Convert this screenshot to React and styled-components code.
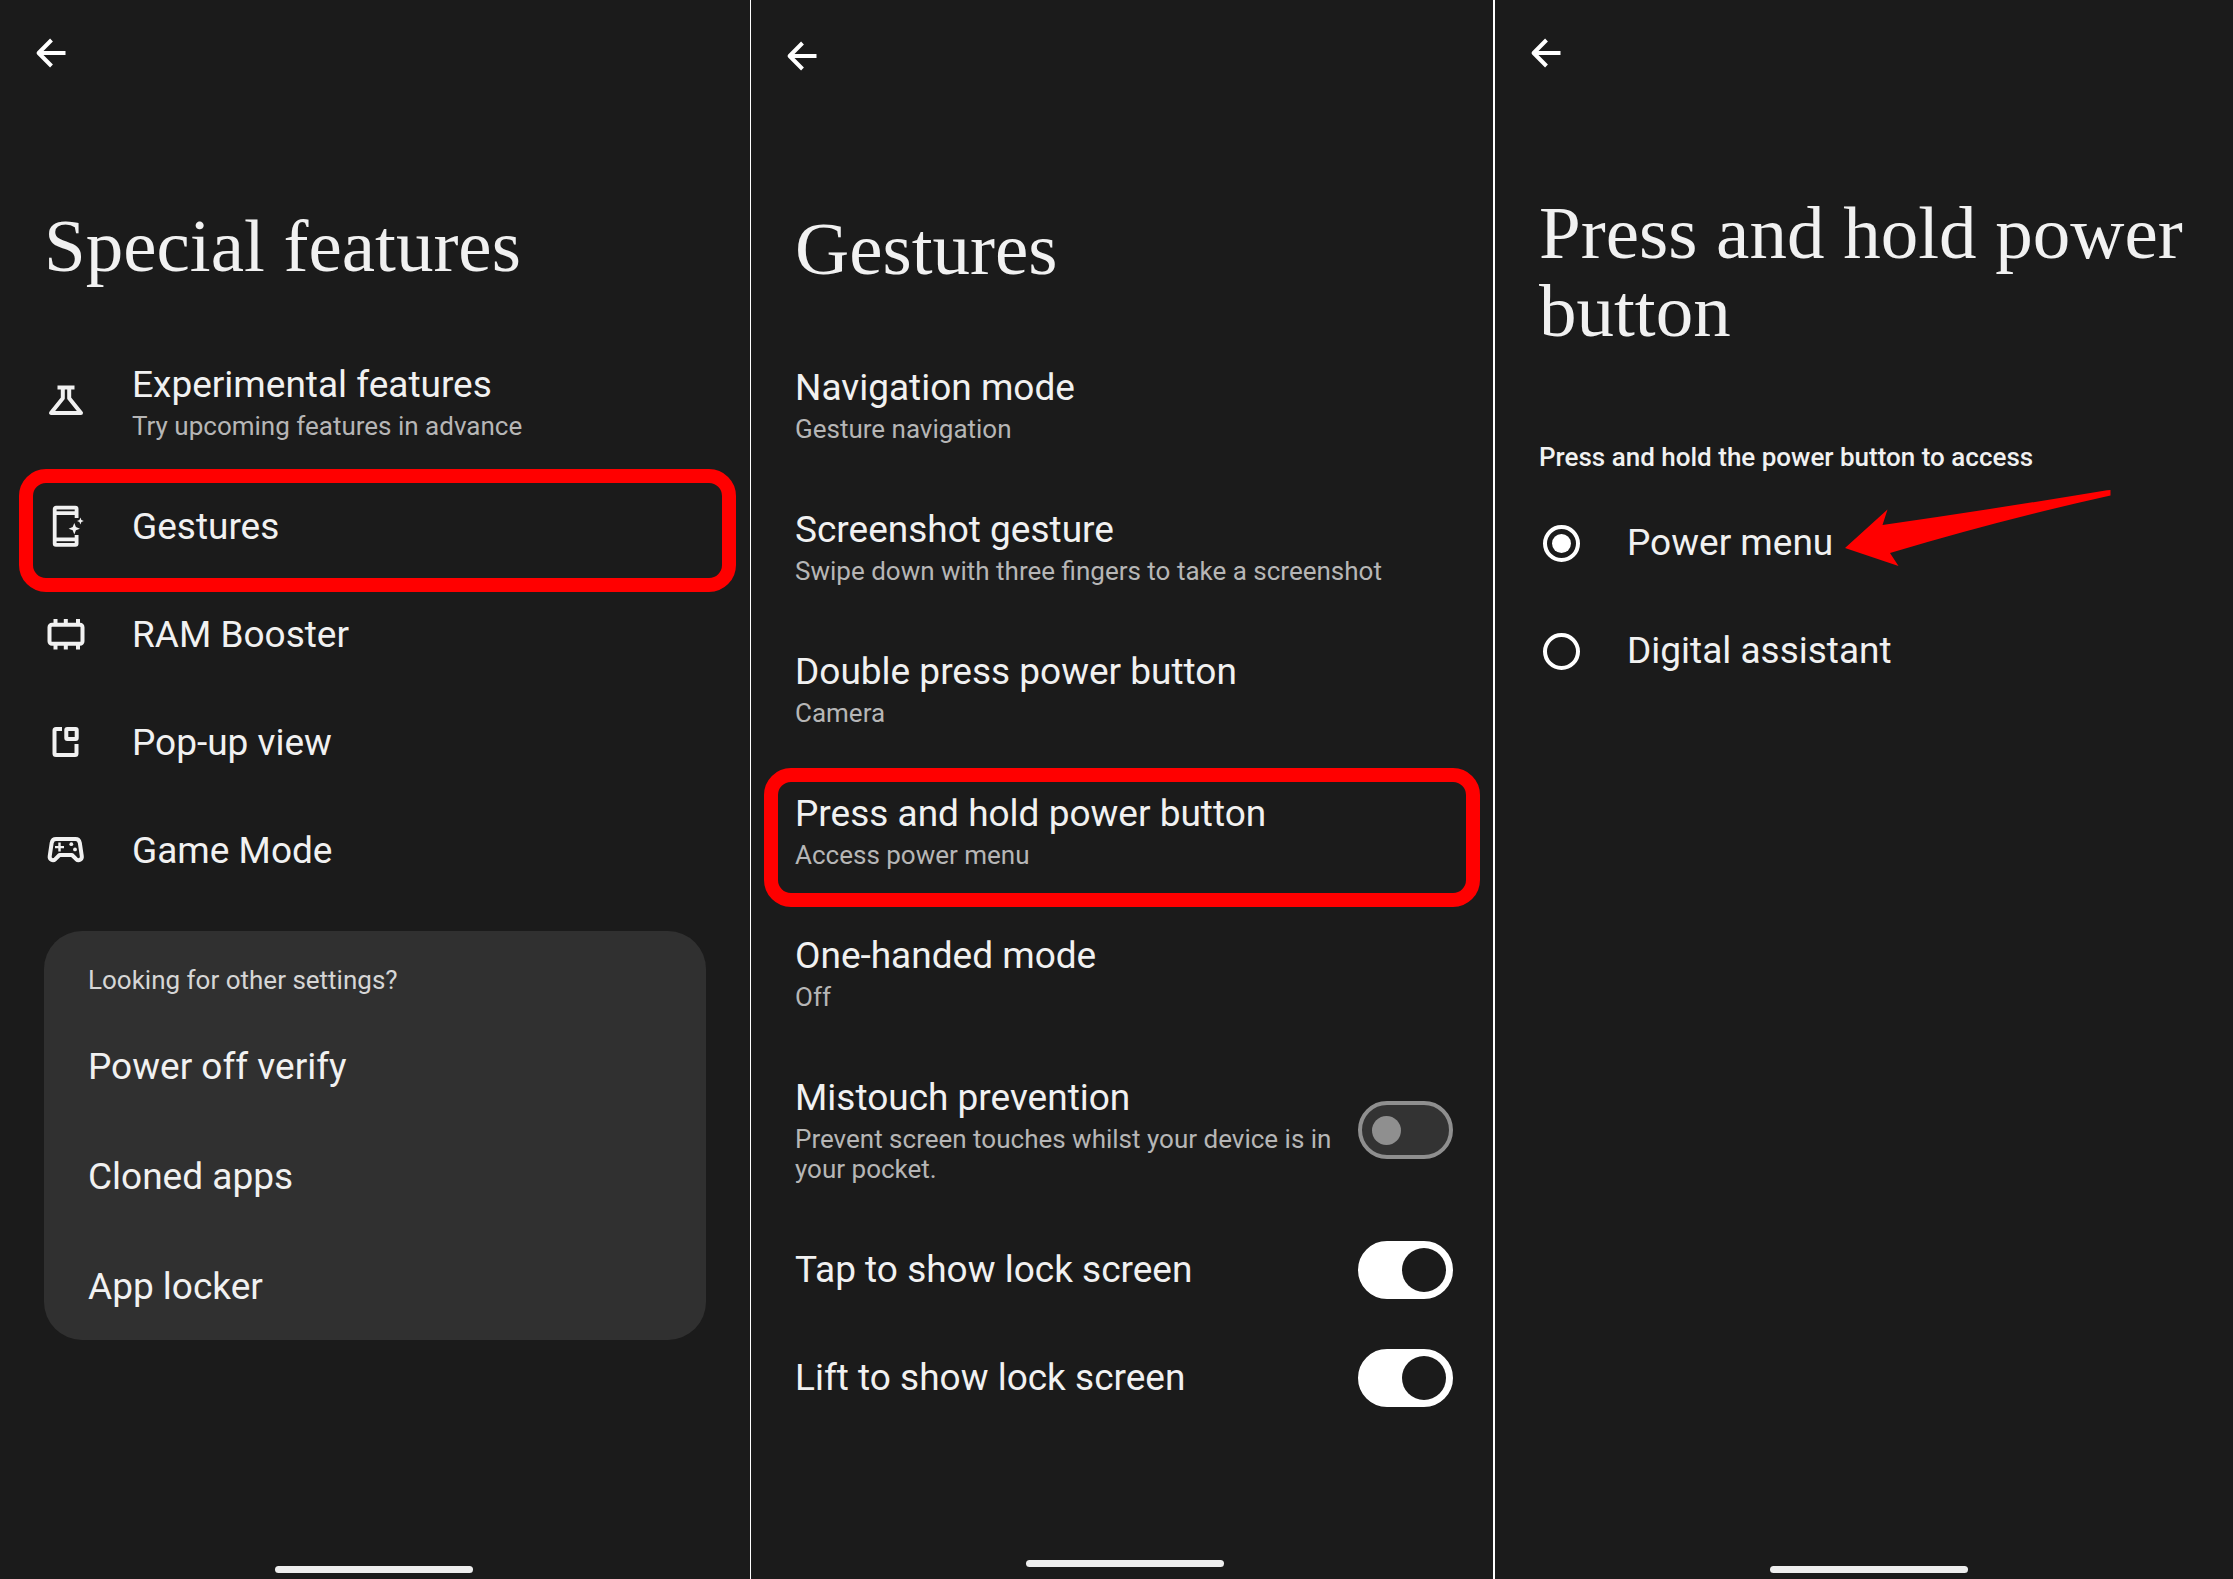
import React, { useState } from 'react'
import styled, { createGlobalStyle, ThemeProvider } from 'styled-components'

const theme = {
  bg: '#1b1b1b',
  card: '#303030',
  text: '#f1f1f1',
  sub: '#b6b6b6',
  mark: '#ff0000',
}

const MENU = [
  { title: 'Experimental features', sub: 'Try upcoming features in advance', icon: <FlaskIcon /> },
  { title: 'Gestures', icon: <GestureIcon />, mark: '-4px 14px -11px 19px' },
  { title: 'RAM Booster', icon: <RamIcon /> },
  { title: 'Pop-up view', icon: <PopupIcon /> },
  { title: 'Game Mode', icon: <GameIcon /> },
]

const OTHER = ['Power off verify', 'Cloned apps', 'App locker']

const GESTURES = [
  { title: 'Navigation mode', sub: 'Gesture navigation' },
  { title: 'Screenshot gesture', sub: 'Swipe down with three fingers to take a screenshot' },
  { title: 'Double press power button', sub: 'Camera' },
  { title: 'Press and hold power button', sub: 'Access power menu', mark: '8px 13px -5px 13px' },
  { title: 'One-handed mode', sub: 'Off' },
]

const TOGGLES = [
  {
    id: 'mistouch',
    title: 'Mistouch prevention',
    sub: 'Prevent screen touches whilst your device is in your pocket.',
  },
  { id: 'tap', title: 'Tap to show lock screen' },
  { id: 'lift', title: 'Lift to show lock screen' },
]

const ACCESS = [
  { id: 'menu', title: 'Power menu' },
  { id: 'assistant', title: 'Digital assistant' },
]

export default function App() {
  return (
    <ThemeProvider theme={theme}>
      <GlobalStyle />
      <Screens>
        <SpecialFeatures />
        <Gestures />
        <PowerButton />
      </Screens>
    </ThemeProvider>
  )
}

function SpecialFeatures() {
  return (
    <Screen $line={1}>
      <Header />
      <Title>Special features</Title>
      {MENU.map((item) => (
        <Item key={item.title} {...item} />
      ))}
      <Card>
        <CardLabel>Looking for other settings?</CardLabel>
        {OTHER.map((name) => (
          <CardLink key={name} href="#">
            {name}
          </CardLink>
        ))}
      </Card>
      <HomeBar />
    </Screen>
  )
}

function Gestures() {
  const [on, setOn] = useState({ mistouch: false, tap: true, lift: true })

  return (
    <Screen $line={2} $top={3} $bottom={12}>
      <Header />
      <Title>Gestures</Title>
      {GESTURES.map((item) => (
        <Item key={item.title} {...item} />
      ))}
      {TOGGLES.map(({ id, title, sub }) => (
        <ToggleRow key={id} htmlFor={id}>
          <Texts>
            <Name>{title}</Name>
            {sub && <Sub>{sub}</Sub>}
          </Texts>
          <Switch
            id={id}
            type="checkbox"
            role="switch"
            checked={on[id]}
            onChange={(e) => setOn({ ...on, [id]: e.target.checked })}
          />
        </ToggleRow>
      ))}
      <HomeBar />
    </Screen>
  )
}

function PowerButton() {
  const [access, setAccess] = useState('menu')

  return (
    <Screen>
      <Header />
      <Title $tall>Press and hold power button</Title>
      <Options>
        <Legend>Press and hold the power button to access</Legend>
        {ACCESS.map(({ id, title }) => (
          <OptionRow key={id} htmlFor={id}>
            <IconBox>
              <Radio
                id={id}
                type="radio"
                name="access"
                checked={access === id}
                onChange={() => setAccess(id)}
              />
            </IconBox>
            <Name>{title}</Name>
            {id === 'menu' && <Pointer />}
          </OptionRow>
        ))}
      </Options>
      <HomeBar />
    </Screen>
  )
}

function Header() {
  return (
    <TopBar>
      <BackButton type="button" aria-label="Back">
        <svg width="32" height="32" viewBox="0 0 32 32" fill="none" stroke="#fff" strokeWidth="4">
          <path d="M16.500 3 3.600 16l12.900 13M3.600 16H30.500" strokeLinejoin="round" />
        </svg>
      </BackButton>
    </TopBar>
  )
}

function Item({ title, sub, icon, mark }) {
  return (
    <ItemRow type="button">
      {icon && <IconBox>{icon}</IconBox>}
      <Texts>
        <Name>{title}</Name>
        {sub && <Sub>{sub}</Sub>}
      </Texts>
      {mark && <Mark $inset={mark} />}
    </ItemRow>
  )
}

function Icon({ children }) {
  return (
    <svg width="44" height="44" viewBox="0 0 44 44" fill="none" stroke="#f1f1f1" strokeWidth="4">
      {children}
    </svg>
  )
}

function FlaskIcon() {
  return (
    <Icon>
      <path d="M13.5 7.5h17M18.8 8v10.2L7 33h30L25.2 18.2V8" strokeLinejoin="round" />
    </Icon>
  )
}

function GestureIcon() {
  return (
    <Icon>
      <path
        d="M32.6 13V4a1.300 1.300 0 0 0-1.300-1.300H12A1.300 1.300 0 0 0 10.700 4v34.500A1.300 1.300 0 0 0 12 39.800h19.300a1.300 1.300 0 0 0 1.300-1.300V30"
        strokeWidth="3.800"
      />
      <path d="M11 8.200h21.500M11 34.300h21.500" strokeWidth="3.800" />
      <path
        d="M30.300 18l1.600 4.100 4.100 1.600-4.100 1.600-1.600 4.100-1.600-4.100-4.100-1.600 4.100-1.600zM36.400 12.600l1 2.400 2.400 1-2.400 1-1 2.400-1-2.400-2.400-1 2.400-1z"
        fill="#f1f1f1"
        stroke="none"
      />
    </Icon>
  )
}

function RamIcon() {
  return (
    <Icon>
      <rect x="5.500" y="11.800" width="33" height="19" rx="2.500" />
      <path d="M11.500 6v6M21.800 6v6M34 6v6M11.500 31v5.500M21.800 31v5.500M34 31v5.500" />
    </Icon>
  )
}

function PopupIcon() {
  return (
    <Icon>
      <path d="M18 8h-6a1.500 1.500 0 0 0-1.500 1.500v23A1.500 1.500 0 0 0 12 34h19a1.500 1.500 0 0 0 1.500-1.500V23" />
      <rect x="22.300" y="8" width="10.400" height="10" rx="1" />
    </Icon>
  )
}

function GameIcon() {
  return (
    <Icon>
      <path
        d="M12 10h19.500c2.500 0 3.800 1.400 4.300 3.800l2 13.400c.4 3.300-3.100 5.300-5.600 3L28 26H15.500l-4.200 4.200c-2.500 2.300-6 .3-5.600-3l2-13.400c.5-2.400 1.800-3.800 4.300-3.800z"
        strokeLinejoin="round"
      />
      <path d="M15.500 13.600v9M11 18.100h9" strokeWidth="2.400" />
      <circle cx="27.300" cy="15.200" r="1.900" fill="#f1f1f1" stroke="none" />
      <circle cx="31" cy="20.400" r="1.900" fill="#f1f1f1" stroke="none" />
    </Icon>
  )
}

function Pointer() {
  return (
    <PointerSvg width="268" height="82" viewBox="0 0 268 82" aria-hidden="true">
      <path d="M1 61 43.500 22.500 38.500 38Q150 22 263 3.200L266.500 3v5.500Q156 33 46 66L54.500 79z" fill="#ff0000" />
    </PointerSvg>
  )
}

const GlobalStyle = createGlobalStyle`
  * {
    box-sizing: border-box;
  }

  body {
    margin: 0;
    background: ${theme.bg};
    color: ${theme.text};
    font-family: Roboto, sans-serif;
  }

  button {
    border: 0;
    background: none;
    color: inherit;
    font: inherit;
    cursor: pointer;
  }
`

const Screens = styled.main`
  display: grid;
  grid-template-columns: 751fr 744fr 738fr;
  min-height: 100vh;
`

const Screen = styled.section`
  display: flex;
  flex-direction: column;
  min-width: 0;
  padding: ${({ $top = 0 }) => $top}px 0 ${({ $bottom = 6 }) => $bottom}px;
  border-right: ${({ $line = 0 }) => $line}px solid #fff;
`

const TopBar = styled.header`
  display: flex;
  align-items: center;
  height: 106px;
  padding: 0 29px;
`

const BackButton = styled.button`
  display: flex;
  align-items: center;
  justify-content: center;
  width: 44px;
  height: 44px;
  padding: 0;
`

const Title = styled.h1`
  margin: 0;
  padding: ${({ $tall }) => ($tall ? '88px 40px 92px 44px' : '101px 40px 46px 44px')};
  font-family: 'Liberation Serif', serif;
  font-size: 75px;
  font-weight: 400;
  line-height: 78px;
`

const ItemRow = styled.button`
  position: relative;
  display: flex;
  align-items: center;
  gap: 44px;
  padding: 32px 44px;
  text-align: left;
`

const IconBox = styled.span`
  display: flex;
  align-items: center;
  justify-content: center;
  flex-shrink: 0;
  width: 44px;
  height: 44px;
`

const Texts = styled.span`
  display: flex;
  flex-direction: column;
  flex: 1;
  gap: 4px;
`

const Name = styled.span`
  font-size: 37px;
  line-height: 44px;
`

const Sub = styled.span`
  color: ${({ theme }) => theme.sub};
  font-size: 26px;
  line-height: 30px;
`

const Mark = styled.span`
  position: absolute;
  inset: ${({ $inset }) => $inset};
  border: 14px solid ${({ theme }) => theme.mark};
  border-radius: 27px;
  pointer-events: none;
`

const Card = styled.div`
  display: flex;
  flex-direction: column;
  gap: 66px;
  margin: 26px 44px 0;
  padding: 34px 44px 31px;
  border-radius: 38px;
  background: ${({ theme }) => theme.card};
`

const CardLabel = styled.p`
  margin: 0 0 -16px;
  color: #d6d6d6;
  font-size: 26px;
  line-height: 30px;
`

const CardLink = styled.a`
  color: inherit;
  font-size: 37px;
  line-height: 44px;
  text-decoration: none;
`

const ToggleRow = styled.label`
  display: flex;
  align-items: center;
  gap: 24px;
  padding: 32px 40px 32px 44px;
`

/* the negative margin keeps one-line rows as high as those without a switch */
const Switch = styled.input`
  display: flex;
  align-items: center;
  flex-shrink: 0;
  appearance: none;
  width: 95px;
  height: 58px;
  margin: -7px 0;
  padding: 0 10px;
  border: 4px solid #8f8f8f;
  border-radius: 29px;
  background: #333;

  &::before {
    content: '';
    width: 29px;
    height: 29px;
    border-radius: 50%;
    background: #8f8f8f;
  }

  &:checked {
    justify-content: flex-end;
    padding: 0 3px;
    border-color: #fff;
    background: #fff;
  }

  &:checked::before {
    width: 44px;
    height: 44px;
    background: ${({ theme }) => theme.bg};
  }
`

const Options = styled.fieldset`
  display: flex;
  flex-direction: column;
  min-width: 0;
  margin: 0;
  padding: 0;
  border: 0;
`

const Legend = styled.legend`
  margin-bottom: 17px;
  padding: 0 44px;
  font-size: 26px;
  font-weight: 500;
  line-height: 30px;
`

const OptionRow = styled.label`
  position: relative;
  display: flex;
  align-items: center;
  gap: 44px;
  padding: 32px 44px;
`

const Radio = styled.input`
  display: grid;
  place-items: center;
  appearance: none;
  width: 37px;
  height: 37px;
  margin: 0;
  border: 4px solid #fff;
  border-radius: 50%;

  &:checked::before {
    content: '';
    width: 19px;
    height: 19px;
    border-radius: 50%;
    background: #fff;
  }
`

const PointerSvg = styled.svg`
  position: absolute;
  top: -2px;
  left: 349px;
`

const HomeBar = styled.div`
  width: 198px;
  height: 7px;
  margin: auto 0 0 275px;
  border-radius: 4px;
  background: #eee;
`
